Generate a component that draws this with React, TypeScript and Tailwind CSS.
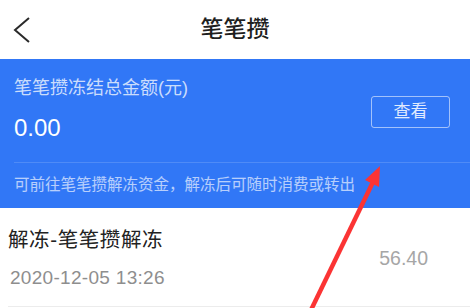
const font = { fontFamily: '"Liberation Sans", "Noto Sans CJK SC", sans-serif' };

function BackChevron() {
  return (
    <svg width="18" height="28" viewBox="0 0 18 28" className="ml-[13px]">
      <polyline points="16,2 2,14 16,26" fill="none" stroke="#2a2a2a" strokeWidth="2" strokeLinejoin="miter" />
    </svg>
  );
}

function RedArrow() {
  return (
    <svg className="pointer-events-none absolute left-0 top-0" width="470" height="308" viewBox="0 0 470 308">
      <line x1="311" y1="310" x2="373" y2="182" stroke="#fb3434" strokeWidth="4.5" />
      <polygon points="380,166 365,180 379,187" fill="#fb3434" />
    </svg>
  );
}

export default function App() {
  return (
    <div className="relative h-[308px] w-[470px] overflow-hidden bg-white" style={font}>
      <header className="relative flex h-[59px] items-center bg-white">
        <BackChevron />
        <h1 className="absolute left-1/2 -translate-x-1/2 text-[23px] font-medium leading-none text-[#1f1f1f]">笔笔攒</h1>
      </header>

      <section className="bg-[#3177f6] pl-[14px] pt-[17px] pb-[12px]">
        <div className="flex items-start justify-between pr-[20px] pb-[19px]">
          <div>
            <p className="text-[18px] leading-[24px] text-white/75">笔笔攒冻结总金额(元)</p>
            <p className="mt-[13px] text-[24px] leading-[30px] text-white">0.00</p>
          </div>
          <button className="mt-[20px] flex h-[32px] w-[79px] items-center justify-center rounded-[3px] border border-white/55 text-[17px] text-white/85">
            查看
          </button>
        </div>
        <div className="h-px bg-white/15" />
        <p className="mt-[11px] text-[15.5px] leading-[22px] text-white/65">可前往笔笔攒解冻资金，解冻后可随时消费或转出</p>
      </section>

      <div className="ml-[8px] flex items-center justify-between border-b border-[#ececec] pr-[42px] pt-[18px] pb-[15px]">
        <div>
          <p className="text-[20.5px] leading-[28px] tracking-[0.6px] text-[#222]">解冻-笔笔攒解冻</p>
          <p className="mt-[11px] pl-[2px] text-[19px] leading-[26px] tracking-[0.3px] text-[#8e8e8e]">2020-12-05 13:26</p>
        </div>
        <span className="text-[19.5px] text-[#a6a6a6]">56.40</span>
      </div>

      <RedArrow />
    </div>
  );
}
